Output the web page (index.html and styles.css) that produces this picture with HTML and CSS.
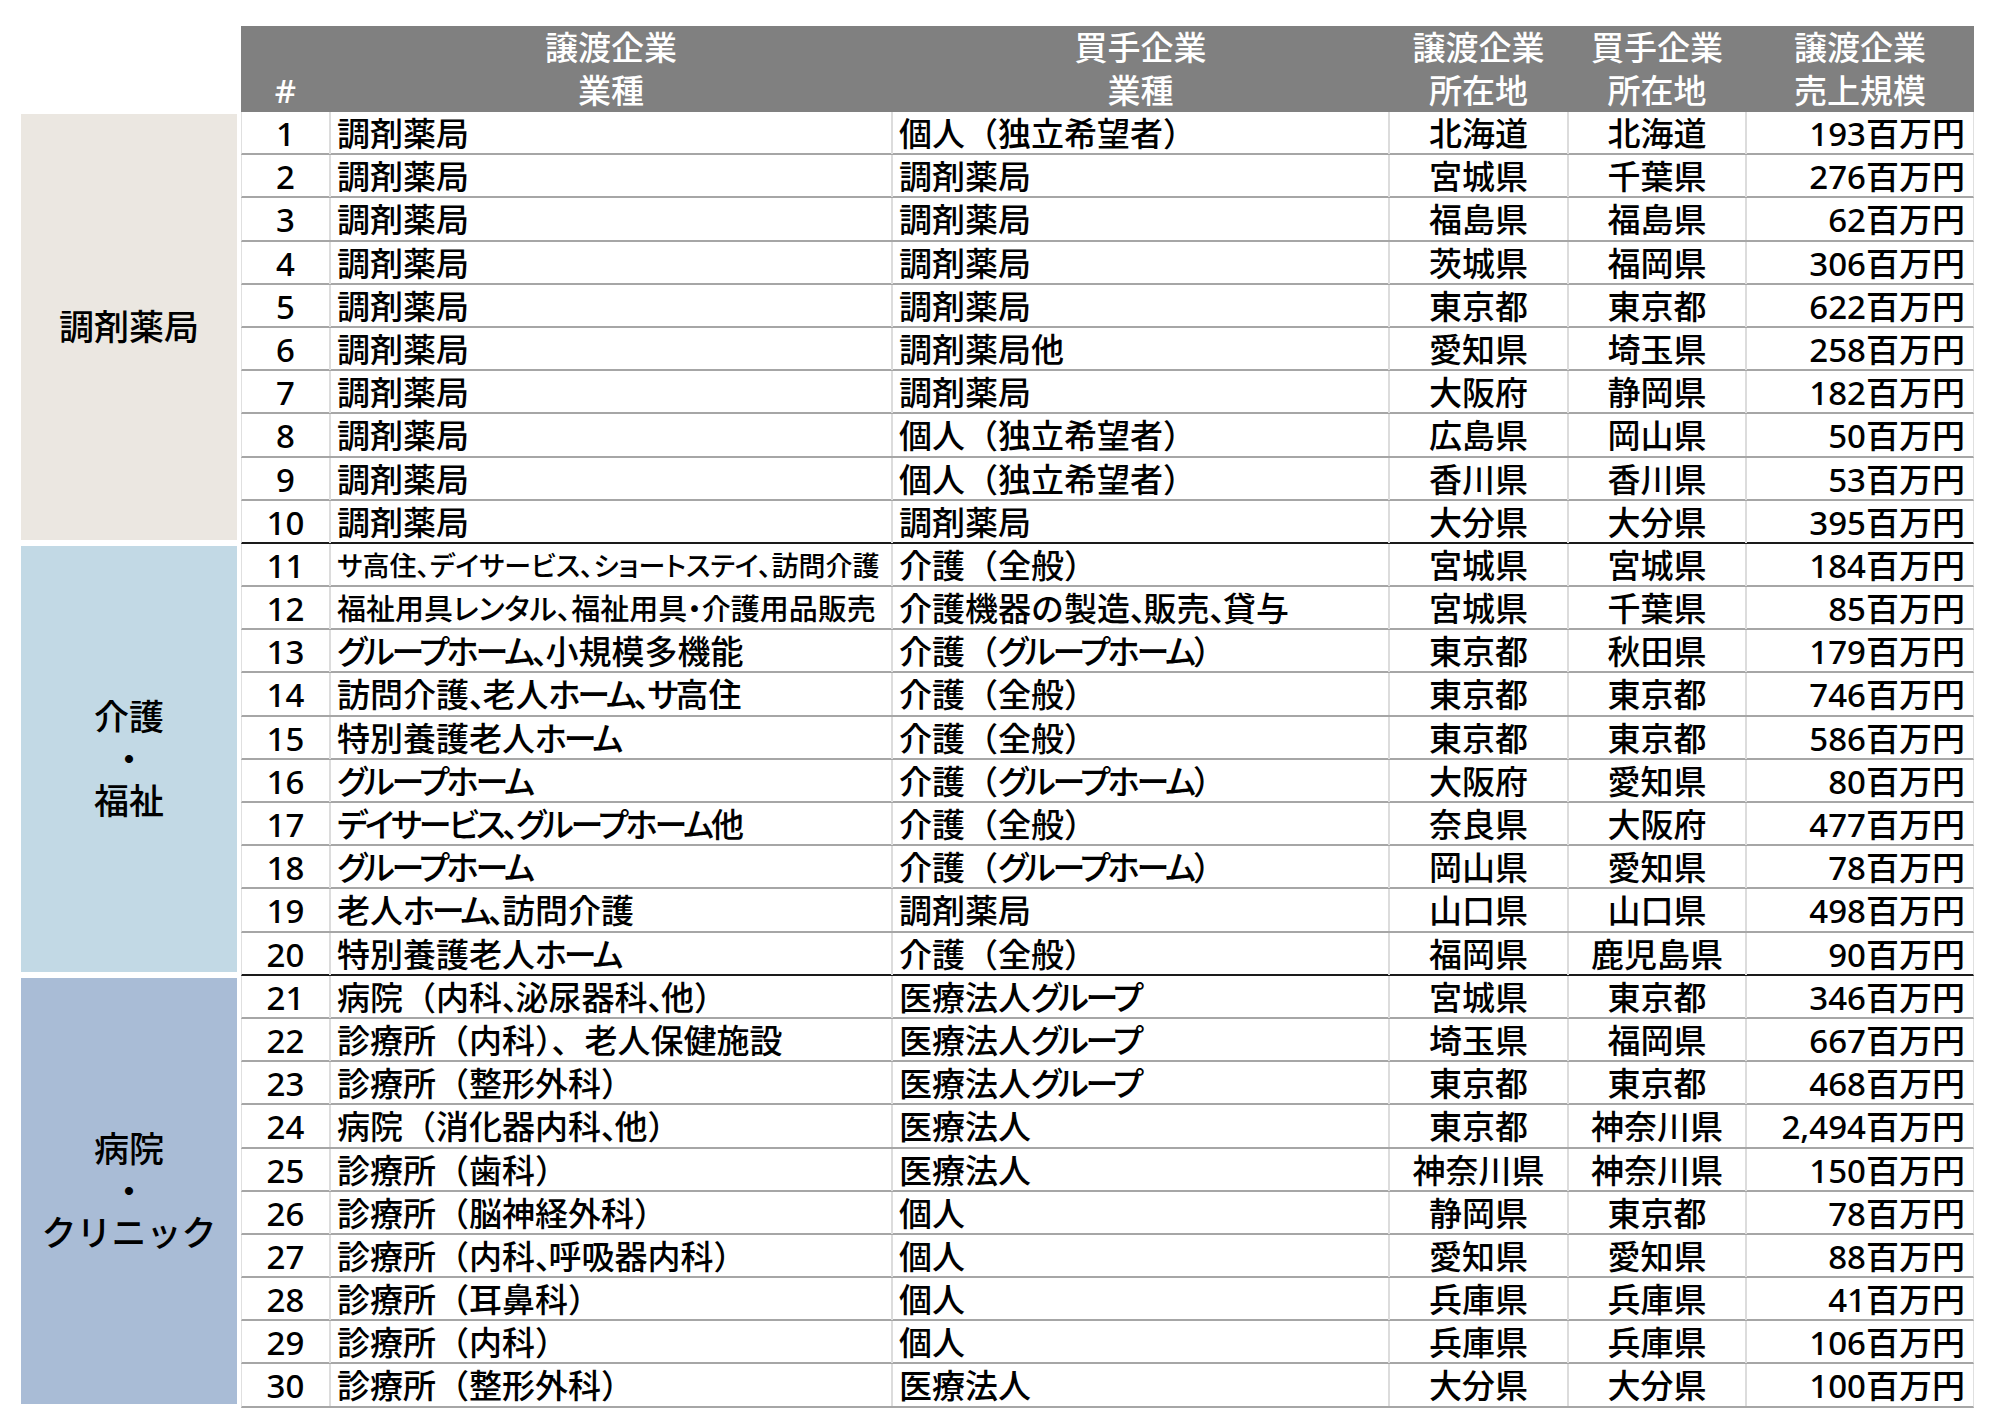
FILE: index.html
```html
<!DOCTYPE html>
<html lang="ja">
<head>
<meta charset="utf-8">
<title>M&amp;A 成約実績</title>
<link rel="stylesheet" href="styles.css">
</head>
<body>
<div class="page">
  <div class="cats">
    <div class="cat cat-pharm"><span>調剤薬局</span></div>
    <div class="cat cat-care"><span>介護</span><span>・</span><span>福祉</span></div>
    <div class="cat cat-clinic"><span>病院</span><span>・</span><span>クリニック</span></div>
  </div>
  <div class="table">
    <div class="head">
      <div class="hc"><span>&nbsp;</span><span>#</span></div>
      <div class="hc"><span>譲渡企業</span><span>業種</span></div>
      <div class="hc"><span>買手企業</span><span>業種</span></div>
      <div class="hc"><span>譲渡企業</span><span>所在地</span></div>
      <div class="hc"><span>買手企業</span><span>所在地</span></div>
      <div class="hc"><span>譲渡企業</span><span>売上規模</span></div>
    </div>
    <div class="row"><div class="c n">1</div><div class="c t">調剤薬局</div><div class="c t">個人（独立希望者）</div><div class="c m">北海道</div><div class="c m">北海道</div><div class="c r">193百万円</div></div>
    <div class="row"><div class="c n">2</div><div class="c t">調剤薬局</div><div class="c t">調剤薬局</div><div class="c m">宮城県</div><div class="c m">千葉県</div><div class="c r">276百万円</div></div>
    <div class="row"><div class="c n">3</div><div class="c t">調剤薬局</div><div class="c t">調剤薬局</div><div class="c m">福島県</div><div class="c m">福島県</div><div class="c r">62百万円</div></div>
    <div class="row"><div class="c n">4</div><div class="c t">調剤薬局</div><div class="c t">調剤薬局</div><div class="c m">茨城県</div><div class="c m">福岡県</div><div class="c r">306百万円</div></div>
    <div class="row"><div class="c n">5</div><div class="c t">調剤薬局</div><div class="c t">調剤薬局</div><div class="c m">東京都</div><div class="c m">東京都</div><div class="c r">622百万円</div></div>
    <div class="row"><div class="c n">6</div><div class="c t">調剤薬局</div><div class="c t">調剤薬局他</div><div class="c m">愛知県</div><div class="c m">埼玉県</div><div class="c r">258百万円</div></div>
    <div class="row"><div class="c n">7</div><div class="c t">調剤薬局</div><div class="c t">調剤薬局</div><div class="c m">大阪府</div><div class="c m">静岡県</div><div class="c r">182百万円</div></div>
    <div class="row"><div class="c n">8</div><div class="c t">調剤薬局</div><div class="c t">個人（独立希望者）</div><div class="c m">広島県</div><div class="c m">岡山県</div><div class="c r">50百万円</div></div>
    <div class="row"><div class="c n">9</div><div class="c t">調剤薬局</div><div class="c t">個人（独立希望者）</div><div class="c m">香川県</div><div class="c m">香川県</div><div class="c r">53百万円</div></div>
    <div class="row sep"><div class="c n">10</div><div class="c t">調剤薬局</div><div class="c t">調剤薬局</div><div class="c m">大分県</div><div class="c m">大分県</div><div class="c r">395百万円</div></div>
    <div class="row"><div class="c n">11</div><div class="c t small">サ高住、デイサービス、ショートステイ、訪問介護</div><div class="c t">介護（全般）</div><div class="c m">宮城県</div><div class="c m">宮城県</div><div class="c r">184百万円</div></div>
    <div class="row"><div class="c n">12</div><div class="c t small2">福祉用具レンタル、福祉用具・介護用品販売</div><div class="c t">介護機器の製造<span class="k">、</span>販売<span class="k">、</span>貸与</div><div class="c m">宮城県</div><div class="c m">千葉県</div><div class="c r">85百万円</div></div>
    <div class="row"><div class="c n">13</div><div class="c t"><span class="k">グループホーム、</span>小規模多機能</div><div class="c t">介護（<span class="k">グループホーム</span>）</div><div class="c m">東京都</div><div class="c m">秋田県</div><div class="c r">179百万円</div></div>
    <div class="row"><div class="c n">14</div><div class="c t">訪問介護<span class="k">、</span>老人<span class="k">ホーム、サ</span>高住</div><div class="c t">介護（全般）</div><div class="c m">東京都</div><div class="c m">東京都</div><div class="c r">746百万円</div></div>
    <div class="row"><div class="c n">15</div><div class="c t">特別養護老人<span class="k">ホーム</span></div><div class="c t">介護（全般）</div><div class="c m">東京都</div><div class="c m">東京都</div><div class="c r">586百万円</div></div>
    <div class="row"><div class="c n">16</div><div class="c t"><span class="k">グループホーム</span></div><div class="c t">介護（<span class="k">グループホーム</span>）</div><div class="c m">大阪府</div><div class="c m">愛知県</div><div class="c r">80百万円</div></div>
    <div class="row"><div class="c n">17</div><div class="c t"><span class="k">デイサービス、グループホーム</span>他</div><div class="c t">介護（全般）</div><div class="c m">奈良県</div><div class="c m">大阪府</div><div class="c r">477百万円</div></div>
    <div class="row"><div class="c n">18</div><div class="c t"><span class="k">グループホーム</span></div><div class="c t">介護（<span class="k">グループホーム</span>）</div><div class="c m">岡山県</div><div class="c m">愛知県</div><div class="c r">78百万円</div></div>
    <div class="row"><div class="c n">19</div><div class="c t">老人<span class="k">ホーム、</span>訪問介護</div><div class="c t">調剤薬局</div><div class="c m">山口県</div><div class="c m">山口県</div><div class="c r">498百万円</div></div>
    <div class="row sep"><div class="c n">20</div><div class="c t">特別養護老人<span class="k">ホーム</span></div><div class="c t">介護（全般）</div><div class="c m">福岡県</div><div class="c m">鹿児島県</div><div class="c r">90百万円</div></div>
    <div class="row"><div class="c n">21</div><div class="c t">病院（内科<span class="k">、</span>泌尿器科<span class="k">、</span>他）</div><div class="c t">医療法人<span class="k">グループ</span></div><div class="c m">宮城県</div><div class="c m">東京都</div><div class="c r">346百万円</div></div>
    <div class="row"><div class="c n">22</div><div class="c t">診療所（内科）、老人保健施設</div><div class="c t">医療法人<span class="k">グループ</span></div><div class="c m">埼玉県</div><div class="c m">福岡県</div><div class="c r">667百万円</div></div>
    <div class="row"><div class="c n">23</div><div class="c t">診療所（整形外科）</div><div class="c t">医療法人<span class="k">グループ</span></div><div class="c m">東京都</div><div class="c m">東京都</div><div class="c r">468百万円</div></div>
    <div class="row"><div class="c n">24</div><div class="c t">病院（消化器内科<span class="k">、</span>他）</div><div class="c t">医療法人</div><div class="c m">東京都</div><div class="c m">神奈川県</div><div class="c r">2,494百万円</div></div>
    <div class="row"><div class="c n">25</div><div class="c t">診療所（歯科）</div><div class="c t">医療法人</div><div class="c m">神奈川県</div><div class="c m">神奈川県</div><div class="c r">150百万円</div></div>
    <div class="row"><div class="c n">26</div><div class="c t">診療所（脳神経外科）</div><div class="c t">個人</div><div class="c m">静岡県</div><div class="c m">東京都</div><div class="c r">78百万円</div></div>
    <div class="row"><div class="c n">27</div><div class="c t">診療所（内科<span class="k">、</span>呼吸器内科）</div><div class="c t">個人</div><div class="c m">愛知県</div><div class="c m">愛知県</div><div class="c r">88百万円</div></div>
    <div class="row"><div class="c n">28</div><div class="c t">診療所（耳鼻科）</div><div class="c t">個人</div><div class="c m">兵庫県</div><div class="c m">兵庫県</div><div class="c r">41百万円</div></div>
    <div class="row"><div class="c n">29</div><div class="c t">診療所（内科）</div><div class="c t">個人</div><div class="c m">兵庫県</div><div class="c m">兵庫県</div><div class="c r">106百万円</div></div>
    <div class="row"><div class="c n">30</div><div class="c t">診療所（整形外科）</div><div class="c t">医療法人</div><div class="c m">大分県</div><div class="c m">大分県</div><div class="c r">100百万円</div></div>
  </div>
</div>
</body>
</html>
```
FILE: styles.css
```css
html, body {
  margin: 0;
  padding: 0;
  background: #ffffff;
}

body {
  font-family: "Noto Sans", "Noto Sans CJK JP", sans-serif;
  font-size: 33px;
  font-weight: 500;
  color: #000000;
}

.page {
  display: flex;
  padding: 26px 0 0 21px;
  column-gap: 4px;
}

.cats {
  width: 216px;
  padding-top: 86px;
  display: flex;
  flex-direction: column;
}

.cat {
  height: 432px;
  box-sizing: border-box;
  border-top: 2px solid #ffffff;
  border-bottom: 4px solid #ffffff;
  display: flex;
  flex-direction: column;
  align-items: center;
  justify-content: center;
  font-size: 35px;
  line-height: 42px;
}

.cat span {
  display: block;
  height: 42px;
}

.cat-pharm { background: #ebe7e1; }
.cat-care { background: #c2d9e5; }
.cat-clinic { background: #a9bcd6; }

.table {
  width: 1733px;
  display: flex;
  flex-direction: column;
}

.head,
.row {
  display: grid;
  grid-template-columns: 89px 562px 497px 179px 178px 228px;
}

.head {
  height: 86px;
  background: #808080;
  color: #ffffff;
}

.hc {
  display: flex;
  flex-direction: column;
  align-items: center;
  justify-content: center;
}

.hc span {
  display: block;
  height: 43px;
  line-height: 43px;
}

.row {
  height: 43.2px;
  box-sizing: border-box;
  border-bottom: 2px solid #a6a6a6;
  border-left: 1px solid #e0e0e0;
  border-right: 1px solid #e0e0e0;
}

.row.sep {
  border-bottom-color: #1a1a1a;
}

.c {
  display: flex;
  align-items: center;
  white-space: nowrap;
  line-height: 40px;
  padding-top: 2px;
  border-right: 2px solid #dcdcdc;
}

.c:last-child {
  border-right: none;
}

.n { justify-content: center; }
.t { padding-left: 6px; }
.m { justify-content: center; }
.r { justify-content: flex-end; padding-right: 10px; }

.k {
  font-feature-settings: "palt";
  letter-spacing: -3px;
}

.small {
  font-size: 27px;
  font-feature-settings: "palt";
}

.small2 {
  font-size: 29px;
  font-feature-settings: "palt";
}
```
